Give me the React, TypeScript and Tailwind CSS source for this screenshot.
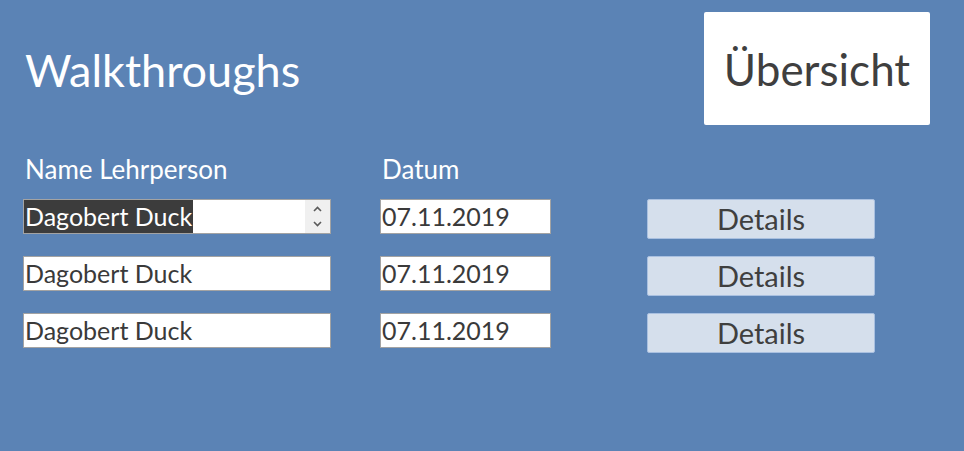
import React from 'react';

const rows = [
  { name: 'Dagobert Duck', date: '07.11.2019', active: true },
  { name: 'Dagobert Duck', date: '07.11.2019', active: false },
  { name: 'Dagobert Duck', date: '07.11.2019', active: false },
];

function Spinner() {
  return (
    <div className="flex h-full w-[25px] flex-col items-center justify-center gap-[9px] bg-[#f0f0f0]">
      <svg width="9" height="6" viewBox="0 0 9 6" fill="none" stroke="#5a5a5a" strokeWidth="1.6">
        <path d="M1 5 L4.5 1.5 L8 5" />
      </svg>
      <svg width="9" height="6" viewBox="0 0 9 6" fill="none" stroke="#5a5a5a" strokeWidth="1.6">
        <path d="M1 1 L4.5 4.5 L8 1" />
      </svg>
    </div>
  );
}

export default function App() {
  return (
    <div className="h-[451px] w-[964px] overflow-hidden bg-[#5b83b5] font-['Lato','Liberation_Sans',sans-serif]">
      <div className="flex items-start justify-between pl-[25px] pr-[34px] pt-[12px]">
        <h1 className="mt-[32px] text-[45px] leading-[52px] text-white">Walkthroughs</h1>
        <button className="flex h-[113px] w-[226px] items-center justify-center rounded-[2px] bg-white text-[44px] text-[#3f3f3f]">
          Übersicht
        </button>
      </div>

      <div className="mt-[29px] flex pl-[25px] text-[26px] leading-[30px] text-white">
        <div className="w-[357px]">Name Lehrperson</div>
        <div>Datum</div>
      </div>

      <div className="mt-[15px] flex flex-col gap-[17px] pl-[23px]">
        {rows.map((row, i) => (
          <div key={i} className="flex h-[40px] items-start">
            <div className="flex h-[35px] w-[308px] items-stretch border border-[#a3a3a3] bg-white">
              <div className="flex flex-1 items-center">
                <span
                  className={
                    row.active
                      ? 'flex h-full items-center bg-[#3c3c3c] pl-[1px] pr-[1px] text-[25px] text-white'
                      : 'pl-[1px] text-[25px] text-[#3a3a3a]'
                  }
                >
                  {row.name}
                </span>
              </div>
              {row.active && <Spinner />}
            </div>
            <div className="ml-[49px] flex h-[35px] w-[171px] items-center border border-[#a3a3a3] bg-white pl-[1px] text-[25px] text-[#3a3a3a]">
              {row.date}
            </div>
            <button className="ml-[96px] flex h-[40px] w-[228px] items-center justify-center rounded-[2px] border border-[#a9c0e0] bg-[#d5dfec] text-[29px] text-[#3f3f3f]">
              Details
            </button>
          </div>
        ))}
      </div>
    </div>
  );
}
